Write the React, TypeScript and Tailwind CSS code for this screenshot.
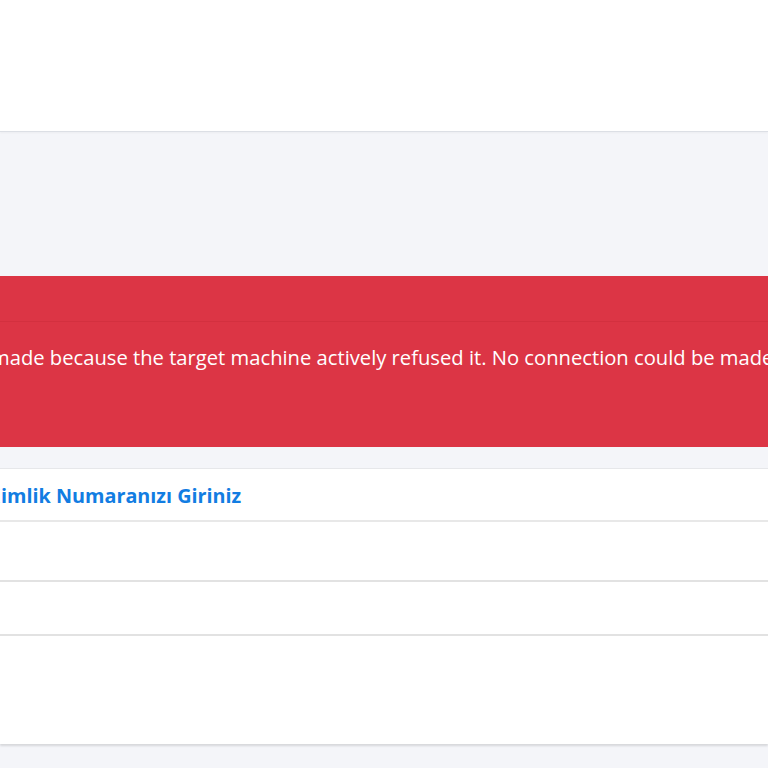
import React from "react";

export default function App() {
  return (
    <div className="w-[768px] h-[768px] overflow-hidden bg-[#f4f5f9]" style={{ fontFamily: '"Open Sans", "Noto Sans", sans-serif' }}>
      <div className="h-[132px] bg-white border-b border-[#dcdfe5] shadow-[0_1px_2px_rgba(0,0,0,0.04)]" />
      <div className="h-[144px]" />
      <div className="h-[171px] bg-[#dc3545] flex flex-col overflow-hidden">
        <div className="h-[46px] border-b border-[#d3303f]" />
        <div className="pt-[21px] text-white text-[20.2px] whitespace-nowrap leading-[28px] flex">
          <span className="w-0 shrink-0 flex justify-end">
            <span className="whitespace-nowrap">No connection could be&nbsp;</span>
          </span>
          <span className="shrink-0 ml-[-9px]">made because the target machine actively refused it. No connection could be made because the target machine actively refused it.</span>
        </div>
      </div>
      <div className="h-[21px]" />
      <div className="bg-white border-t border-[#e6e7ea] shadow-[0_2px_2px_rgba(0,0,0,0.12)] flex flex-col">
        <div className="h-[53px] flex items-center border-b-2 border-[#e8e8e8] whitespace-nowrap pt-[3px] text-[#127de2] font-bold text-[19.8px]">
          <span className="w-0 shrink-0 flex justify-end">
            <span className="whitespace-nowrap">T.C. K</span>
          </span>
          <span className="shrink-0 ml-[1px]">imlik Numaranızı Giriniz</span>
        </div>
        <div className="h-[60px] border-b-2 border-[#e2e2e2]" />
        <div className="h-[54px] border-b-2 border-[#e2e2e2]" />
        <div className="h-[108px]" />
      </div>
    </div>
  );
}
